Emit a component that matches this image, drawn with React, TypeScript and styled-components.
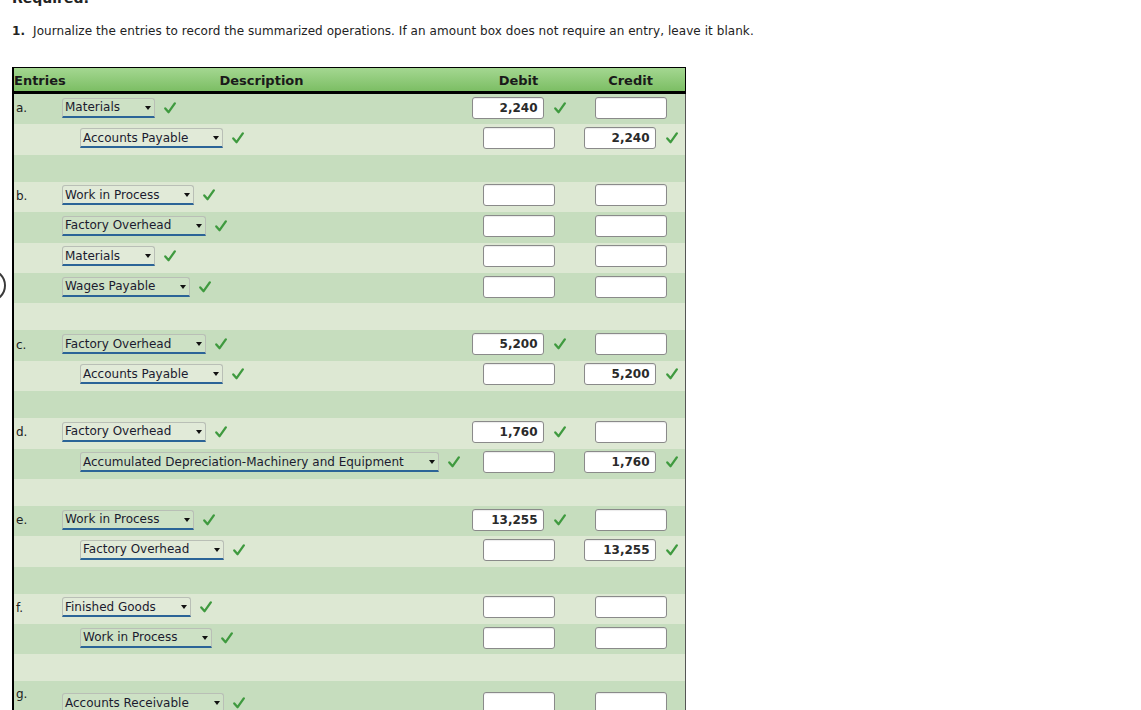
import styled, { createGlobalStyle } from "styled-components";

const GlobalStyle = createGlobalStyle`
  html, body {
    margin: 0;
    padding: 0;
    background: #ffffff;
  }
  body {
    font-family: "DejaVu Sans", Verdana, sans-serif;
    color: #222222;
  }
`;

type Line = {
  account: string;
  indent?: boolean;
  debit?: string;
  credit?: string;
};

type Entry = {
  label: string;
  lines: Line[];
  tall?: boolean;
};

const entries: Entry[] = [
  {
    label: "a.",
    lines: [
      { account: "Materials", debit: "2,240" },
      { account: "Accounts Payable", indent: true, credit: "2,240" },
    ],
  },
  {
    label: "b.",
    lines: [
      { account: "Work in Process" },
      { account: "Factory Overhead" },
      { account: "Materials" },
      { account: "Wages Payable" },
    ],
  },
  {
    label: "c.",
    lines: [
      { account: "Factory Overhead", debit: "5,200" },
      { account: "Accounts Payable", indent: true, credit: "5,200" },
    ],
  },
  {
    label: "d.",
    lines: [
      { account: "Factory Overhead", debit: "1,760" },
      {
        account: "Accumulated Depreciation-Machinery and Equipment",
        indent: true,
        credit: "1,760",
      },
    ],
  },
  {
    label: "e.",
    lines: [
      { account: "Work in Process", debit: "13,255" },
      { account: "Factory Overhead", indent: true, credit: "13,255" },
    ],
  },
  {
    label: "f.",
    lines: [
      { account: "Finished Goods" },
      { account: "Work in Process", indent: true },
    ],
  },
  {
    label: "g.",
    tall: true,
    lines: [{ account: "Accounts Receivable" }],
  },
];

function Check() {
  return (
    <CheckIcon viewBox="0 0 12 12" aria-hidden="true">
      <path d="M1.3 6.4 L4.6 10.2 L10.8 1.4" />
    </CheckIcon>
  );
}

function Amount({ value }: { value?: string }) {
  return (
    <AmountCell>
      <AmountBox>{value}</AmountBox>
      {value && <Check />}
    </AmountCell>
  );
}

function App() {
  let rowIndex = 0;
  const rows: JSX.Element[] = [];

  entries.forEach((entry, ei) => {
    entry.lines.forEach((line, li) => {
      const dark = rowIndex % 2 === 0;
      rowIndex++;
      rows.push(
        <Row key={`${ei}-${li}`} $dark={dark} $tall={entry.tall}>
          <EntryCell $tall={entry.tall}>{li === 0 ? entry.label : ""}</EntryCell>
          <DescCell $indent={line.indent}>
            <Select>
              <span>{line.account}</span>
              <Arrow />
            </Select>
            <Check />
          </DescCell>
          <Amount value={line.debit} />
          <Amount value={line.credit} />
        </Row>
      );
    });
    if (!entry.tall) {
      const dark = rowIndex % 2 === 0;
      rowIndex++;
      rows.push(<BlankRow key={`${ei}-blank`} $dark={dark} />);
    }
  });

  return (
    <>
      <GlobalStyle />
      <Page>
        <Ring />
        <Heading>Required:</Heading>
        <Instruction>
          <b>1.</b>
          <span>
            Journalize the entries to record the summarized operations. If an
            amount box does not require an entry, leave it blank.
          </span>
        </Instruction>
        <Table>
          <Header>
            <HeadCell $align="left">Entries</HeadCell>
            <HeadCell>Description</HeadCell>
            <HeadCell>Debit</HeadCell>
            <HeadCell>Credit</HeadCell>
          </Header>
          {rows}
        </Table>
      </Page>
    </>
  );
}

export default App;

const COLUMNS = "48px minmax(0, 1fr) 115px 109px";

const Page = styled.div`
  position: relative;
  padding: 0 0 0 12px;
  height: 710px;
  overflow: hidden;
`;

const Ring = styled.div`
  position: absolute;
  left: -27px;
  top: 269px;
  width: 29px;
  height: 29px;
  border: 2px solid #3a3a3a;
  border-radius: 50%;
`;

const Heading = styled.div`
  font-weight: bold;
  font-size: 14px;
  margin-top: -10px;
  height: 14px;
  color: #222;
`;

const Instruction = styled.div`
  display: flex;
  gap: 8px;
  font-size: 12px;
  letter-spacing: 0.06px;
  margin-top: 20px;
  color: #222;

  b {
    font-weight: bold;
  }
`;

const Table = styled.div`
  margin-top: 29px;
  width: 674px;
  border-left: 2px solid #000;
  border-right: 1px solid #555;
  box-sizing: border-box;
`;

const Header = styled.div`
  display: grid;
  grid-template-columns: ${COLUMNS};
  height: 23px;
  align-items: center;
  background: linear-gradient(#a4d791, #7cbe64);
  border-top: 1px solid #000;
  border-bottom: 3px solid #000;
  margin-right: -1px;
  border-right: 1px solid #000;
`;

const HeadCell = styled.div<{ $align?: "left" | "center" }>`
  font-weight: bold;
  font-size: 13px;
  color: #1a1a1a;
  text-align: ${(p) => p.$align || "center"};
  padding-top: 1px;
`;

const Row = styled.div<{ $dark: boolean; $tall?: boolean }>`
  display: grid;
  grid-template-columns: ${COLUMNS};
  align-items: center;
  height: ${(p) => (p.$tall ? "44px" : "30.4px")};
  padding-bottom: ${(p) => (p.$tall ? "0" : "3px")};
  box-sizing: border-box;
  background: ${(p) => (p.$dark ? "#c6ddbe" : "#dde8d3")};
`;

const BlankRow = styled.div<{ $dark: boolean }>`
  height: 27px;
  background: ${(p) => (p.$dark ? "#c6ddbe" : "#dde8d3")};
`;

const EntryCell = styled.div<{ $tall?: boolean }>`
  font-size: 12px;
  color: #222;
  padding-left: 2px;
  align-self: ${(p) => (p.$tall ? "start" : "center")};
  padding-top: ${(p) => (p.$tall ? "6px" : "1px")};
`;

const DescCell = styled.div<{ $indent?: boolean }>`
  display: flex;
  align-items: center;
  gap: 9px;
  padding-left: ${(p) => (p.$indent ? "18px" : "0")};
  white-space: nowrap;
`;

const Select = styled.div`
  display: inline-flex;
  align-items: center;
  height: 17px;
  padding: 0 3px 0 2px;
  gap: 25px;
  font-size: 12px;
  color: #1b1b2f;
  border: 1px solid #b9bfb6;
  border-bottom: 2px solid #2b6497;
  border-radius: 3px 3px 0 0;
  background: rgba(255, 255, 255, 0.12);
`;

const Arrow = styled.span`
  width: 0;
  height: 0;
  border-left: 3px solid transparent;
  border-right: 3px solid transparent;
  border-top: 4px solid #111;
  margin-top: 1px;
`;

const CheckIcon = styled.svg`
  width: 12px;
  height: 12px;
  flex: none;

  path {
    fill: none;
    stroke: #3f9a3f;
    stroke-width: 2.3;
    stroke-linecap: round;
    stroke-linejoin: round;
  }
`;

const AmountCell = styled.div`
  display: flex;
  justify-content: center;
  align-items: center;
  gap: 10px;
`;

const AmountBox = styled.div`
  width: 72px;
  height: 22px;
  box-sizing: border-box;
  border: 1px solid #8a8a8a;
  border-radius: 3px;
  background: #fff;
  box-shadow: inset 0 1px 1px rgba(0, 0, 0, 0.08);
  font-size: 12px;
  font-weight: bold;
  color: #2a2a2a;
  text-align: right;
  line-height: 20px;
  padding-right: 5px;
`;
